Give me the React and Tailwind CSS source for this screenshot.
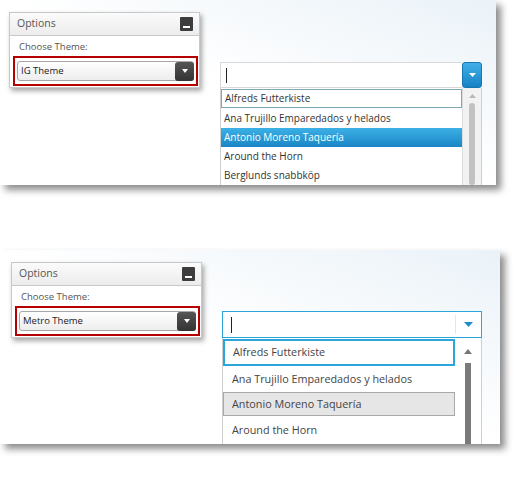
import React from "react";

const font = { fontFamily: '"Open Sans", "Noto Sans", sans-serif' };

function OptionsBox({ label }) {
  return (
    <div className="w-[191px] h-[76px] bg-white border border-[#c8c8c8] shadow-[2px_3px_5px_rgba(0,0,0,0.35)] flex flex-col">
      <div className="h-[23px] flex items-center justify-between pl-[7px] pr-[6px] bg-gradient-to-b from-[#fbfbfb] to-[#ececec] border-b border-[#c9c9c9]">
        <span className="text-[10.5px] text-[#555]">Options</span>
        <div className="w-[13px] h-[14px] bg-[#3c3c3c] rounded-[1px] flex items-end justify-center pb-[3px]">
          <div className="w-[7px] h-[2px] bg-white" />
        </div>
      </div>
      <div className="pl-[9px] pt-[4px] text-[9.5px] text-[#555] leading-[13px]">Choose Theme:</div>
      <div className="mt-[3px] ml-[3px] w-[185px] h-[30px] border-2 border-[#b40000] p-[2px] flex items-center">
        <div className="flex-1 h-[20px] rounded-[3px] border border-[#a8a8a8] bg-gradient-to-b from-white to-[#ededed] flex items-center justify-between pl-[3px]">
          <span className="text-[9.5px] text-[#222]">{label}</span>
          <div className="w-[19px] h-[19px] -mr-px rounded-[3px] bg-gradient-to-b from-[#555] to-[#333] flex items-center justify-center">
            <svg width="6" height="4" viewBox="0 0 6 4"><path d="M0 0h6L3 4z" fill="#fff" /></svg>
          </div>
        </div>
      </div>
    </div>
  );
}

const items = [
  "Alfreds Futterkiste",
  "Ana Trujillo Emparedados y helados",
  "Antonio Moreno Taquería",
  "Around the Horn",
  "Berglunds snabbköp",
];

function IgCombo() {
  return (
    <div className="w-[262px] flex flex-col">
      <div className="h-[26px] flex">
        <div className="flex-1 border border-[#d8d8d8] border-r-0 bg-white flex items-center pl-[5px]">
          <div className="w-px h-[15px] bg-[#222]" />
        </div>
        <div className="w-[20px] rounded-[3px] bg-gradient-to-b from-[#3fb0e8] to-[#1682c4] border border-[#1776b0] flex items-center justify-center">
          <svg width="7" height="4" viewBox="0 0 7 4"><path d="M0 0h7L3.5 4z" fill="#fff" /></svg>
        </div>
      </div>
      <div className="flex border-l border-r border-[#cfcfcf] bg-white h-[97px] overflow-hidden">
        <div className="flex-1 flex flex-col text-[10px] text-[#333]">
          <div className="h-[19px] border border-[#7ea7b8] flex items-center pl-[3px] mt-px">{items[0]}</div>
          <div className="h-[20px] flex items-center pl-[3px]">{items[1]}</div>
          <div className="h-[19px] flex items-center pl-[3px] text-white bg-gradient-to-b from-[#3cb0e6] to-[#1a86c6]">{items[2]}</div>
          <div className="h-[19px] flex items-center pl-[3px]">{items[3]}</div>
          <div className="h-[19px] flex items-center pl-[3px]">{items[4]}</div>
        </div>
        <div className="w-[19px] bg-[#f2f2f2] border-l border-[#dcdcdc] flex flex-col items-center pt-[6px]">
          <svg width="7" height="4" viewBox="0 0 7 4"><path d="M3.5 0L7 4H0z" fill="#b8b8b8" /></svg>
          <div className="mt-[5px] w-[6px] flex-1 rounded-[3px] bg-[#c2c2c2]" />
        </div>
      </div>
    </div>
  );
}

function MetroCombo() {
  return (
    <div className="w-[260px] flex flex-col">
      <div className="h-[27px] border border-[#2ba6dc] bg-white flex">
        <div className="flex-1 flex items-center pl-[8px]">
          <div className="w-px h-[16px] bg-[#222]" />
        </div>
        <div className="w-[26px] flex items-center justify-center my-[3px] border-l border-[#e6e6e6]">
          <svg width="9" height="5" viewBox="0 0 9 5"><path d="M0 0h9L4.5 5z" fill="#1d8fd0" /></svg>
        </div>
      </div>
      <div className="flex border-l border-r border-[#cfcfcf] bg-white h-[106px] overflow-hidden">
        <div className="flex-1 flex flex-col text-[10.8px] text-[#444]">
          <div className="h-[27px] border-2 border-[#2ba6dc] flex items-center pl-[8px] mt-px">{items[0]}</div>
          <div className="h-[26px] flex items-center pl-[9px]">{items[1]}</div>
          <div className="h-[25px] bg-[#e6e6e6] border border-[#a9a9a9] flex items-center pl-[8px]">{items[2]}</div>
          <div className="h-[28px] flex items-center pl-[9px]">{items[3]}</div>
        </div>
        <div className="w-[26px] flex flex-col items-center pt-[11px]">
          <svg width="8" height="5" viewBox="0 0 8 5"><path d="M4 0L8 5H0z" fill="#777" /></svg>
          <div className="mt-[9px] w-[6px] flex-1 bg-[#7a7a7a]" />
        </div>
      </div>
    </div>
  );
}

export default function App() {
  return (
    <div className="w-[525px] h-[495px] bg-white flex flex-col" style={font}>
      <div className="w-[496px] h-[185px] shadow-[5px_5px_7px_rgba(0,0,0,0.45)] bg-gradient-to-bl from-[#eaf2f8] via-white to-white flex items-start pl-[9px] pt-[12px]">
        <OptionsBox label="IG Theme" />
        <div className="ml-[20px] mt-[50px]">
          <IgCombo />
        </div>
      </div>
      <div className="mt-[65px] w-[500px] h-[194px] shadow-[5px_5px_7px_rgba(0,0,0,0.45)] bg-gradient-to-bl from-[#eaf2f8] via-white to-white flex items-start pl-[11px] pt-[12px]">
        <OptionsBox label="Metro Theme" />
        <div className="ml-[20px] mt-[49px]">
          <MetroCombo />
        </div>
      </div>
    </div>
  );
}
